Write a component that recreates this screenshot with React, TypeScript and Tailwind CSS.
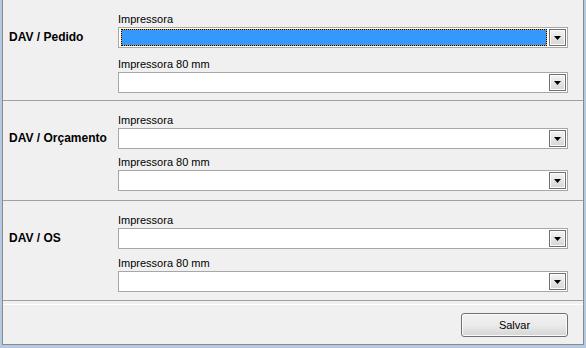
import React from "react";

const font = { fontFamily: '"Liberation Sans", Arial, sans-serif' };

function Arrow() {
  return (
    <div className="w-[17px] h-[17px] border border-[#707070] bg-gradient-to-b from-[#f4f4f4] to-[#d6d6d6] flex items-center justify-center shadow-[inset_0_0_0_1px_#fcfcfc]">
      <svg width="7" height="4" viewBox="0 0 7 4" className="mt-[1px]">
        <polygon points="0,0 7,0 3.5,4" fill="#000" />
      </svg>
    </div>
  );
}

function Combo({ focused }: { focused?: boolean }) {
  return (
    <div className="w-[450px] h-[21px] border border-[#a7a7a7] bg-white flex items-center pl-[2px] pr-[1px] gap-[2px]">
      <div className="flex-1 h-[17px]">
        {focused && (
          <div className="w-full h-full bg-[#e8a040]">
            <div className="w-full h-full border border-dotted border-black bg-[#3399ff] bg-clip-padding" />
          </div>
        )}
      </div>
      <Arrow />
    </div>
  );
}

function Section({ title, focused, first, gapClass }: { title: string; focused?: boolean; first?: boolean; gapClass: string }) {
  return (
    <div className={`flex border-b border-[#a0a0a0] ${first ? "h-[101px]" : "h-[100px]"}`}>
      <div className="w-[115px] pl-[6px] pt-[30px] text-[12px] leading-[15px] font-bold text-black">{title}</div>
      <div className="flex flex-col pt-[12px]">
        <div className="text-[11px] leading-[14px] h-[14px] mb-[1px] text-black">Impressora</div>
        <Combo focused={focused} />
        <div className={`text-[11px] leading-[14px] h-[14px] mb-[1px] text-black ${gapClass}`}>Impressora 80 mm</div>
        <Combo />
      </div>
    </div>
  );
}

export default function App() {
  return (
    <div className="w-[586px] h-[348px] bg-[#b4c9e2] pl-[2px] pr-[2px] pb-[3px]" style={font}>
      <div className="h-[345px] bg-[#f0f0f0] border-l border-r border-b border-[#8a8a8a] flex flex-col">
        <Section title="DAV / Pedido" focused first gapClass="mt-[9px]" />
        <Section title="DAV / Orçamento" gapClass="mt-[6px]" />
        <Section title="DAV / OS" gapClass="mt-[7px]" />
        <div className="flex-1 flex flex-col">
          <div className="h-[3px]" />
          <div className="h-px bg-white" />
          <div className="flex justify-end pr-[15px] pt-[8px]">
            <button className="w-[107px] h-[24px] rounded-[3px] border border-[#707070] bg-gradient-to-b from-[#f2f2f2] via-[#ebebeb] to-[#d5d5d5] text-[11px] text-black shadow-[inset_0_0_0_1px_#fafafa]">
              Salvar
            </button>
          </div>
        </div>
      </div>
    </div>
  );
}
